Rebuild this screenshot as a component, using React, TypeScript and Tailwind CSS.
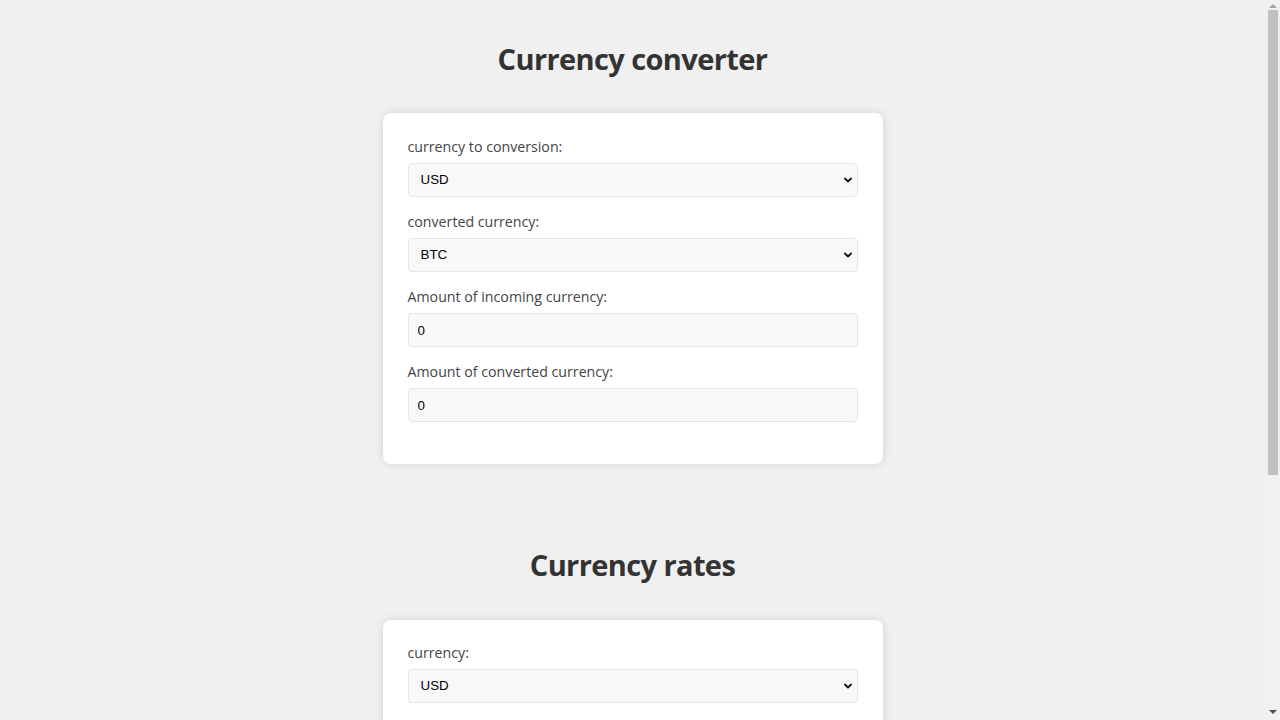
import React, { useState } from 'react';

const currencies = ['USD', 'EUR', 'RUB', 'BTC', 'ETH'];

const Chevron = () => (
    <svg
        className="pointer-events-none absolute right-[5px] top-1/2 -translate-y-1/2"
        width="10"
        height="10"
        viewBox="0 0 10 10"
        fill="none"
    >
        <path d="M2 3.5 L5 6.5 L8 3.5" stroke="#111" strokeWidth="1.8" strokeLinecap="round" strokeLinejoin="round" />
    </svg>
);

const Select: React.FC<{ value: string; onChange: (v: string) => void }> = ({ value, onChange }) => (
    <div className="relative">
        <select
            value={value}
            onChange={(e) => onChange(e.target.value)}
            className="h-[34px] w-full appearance-none rounded-[4px] border border-[#e6e6e6] bg-[#f8f8f8] pl-[12px] pr-6 text-[13.333px] text-black outline-none"
            style={{ fontFamily: '"Liberation Sans", Arial, sans-serif' }}
        >
            {currencies.map((c) => (
                <option key={c} value={c}>{c}</option>
            ))}
        </select>
        <Chevron />
    </div>
);

const Field: React.FC<{ label: string; children: React.ReactNode }> = ({ label, children }) => (
    <div className="mb-[15px]">
        <label className="mb-[6px] block text-[14.2px] leading-[20px] text-[#444]">{label}</label>
        {children}
    </div>
);

const NumberInput: React.FC<{ value: string; onChange: (v: string) => void }> = ({ value, onChange }) => (
    <input
        type="text"
        value={value}
        onChange={(e) => onChange(e.target.value)}
        className="h-[34px] w-full rounded-[4px] border border-[#e6e6e6] bg-[#f8f8f8] px-[9px] text-[13.333px] text-black outline-none"
        style={{ fontFamily: '"Liberation Sans", Arial, sans-serif' }}
    />
);

// page scrollbar, as the browser shows it in the reference
const Scrollbar = () => (
    <div className="flex w-[15px] shrink-0 flex-col items-center bg-[#f1f1f1]">
        <div className="flex h-[10px] items-center justify-center pt-[2px]">
            <div className="h-0 w-0 border-x-[4px] border-b-[4px] border-x-transparent border-b-[#a3a3a3]" />
        </div>
        <div className="ml-[1px] h-[465px] w-[10px] bg-[#c1c1c1]" />
        <div className="flex-1" />
        <div className="flex h-[12px] items-start justify-center pt-[2px]">
            <div className="h-0 w-0 border-x-[4px] border-t-[4px] border-x-transparent border-t-[#505050]" />
        </div>
    </div>
);

export default function App() {
    const [from, setFrom] = useState('USD');
    const [to, setTo] = useState('BTC');
    const [amount, setAmount] = useState('0');
    const [converted, setConverted] = useState('0');
    const [base, setBase] = useState('USD');

    return (
        <div
            className="flex h-screen overflow-hidden bg-[#f0f0f0] text-[#333]"
            style={{ fontFamily: '"Segoe UI", "Open Sans", sans-serif' }}
        >
            <main className="flex-1 overflow-hidden pt-[34px]">
                <h1 className="text-center text-[29px] font-bold leading-[50px] tracking-[-0.6px] text-[#333]">Currency converter</h1>

                <div className="mx-auto mt-[29px] w-[500px] rounded-[8px] bg-white px-[25px] pb-[27px] pt-[24px] shadow-[0_0_10px_rgba(0,0,0,0.12)]">
                    <Field label="currency to conversion:">
                        <Select value={from} onChange={setFrom} />
                    </Field>
                    <Field label="converted currency:">
                        <Select value={to} onChange={setTo} />
                    </Field>
                    <Field label="Amount of incoming currency:">
                        <NumberInput value={amount} onChange={setAmount} />
                    </Field>
                    <Field label="Amount of converted currency:">
                        <NumberInput value={converted} onChange={setConverted} />
                    </Field>
                </div>

                <h1 className="mt-[76px] text-center text-[29px] font-bold leading-[50px] tracking-[-0.6px] text-[#333]">Currency rates</h1>

                <div className="mx-auto mt-[30px] w-[500px] rounded-[8px] bg-white px-[25px] pb-[26px] pt-[23px] shadow-[0_0_10px_rgba(0,0,0,0.12)]">
                    <Field label="currency:">
                        <Select value={base} onChange={setBase} />
                    </Field>
                </div>
            </main>
            <Scrollbar />
        </div>
    );
}
